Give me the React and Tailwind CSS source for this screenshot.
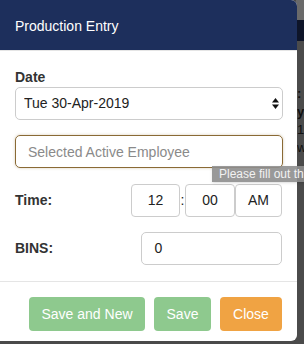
import React from 'react';

const App = () => {
  return (
    <div
      className="relative w-[304px] h-[344px] overflow-hidden bg-[#4a4a4a] text-[#333]"
      style={{ fontFamily: '"Liberation Sans", Arial, sans-serif' }}
    >
      {/* page behind the backdrop, only the right strip shows */}
      <div className="absolute right-0 top-0 w-[8px] h-[344px] flex flex-col">
        <div className="h-[20px] bg-[#6a6a6a]"></div>
        <div className="h-[21px] bg-[#0e1529]"></div>
        <div className="flex-1 bg-[#4b4b4b] text-[#111] text-[13px] leading-[18px] pl-[1px] pt-[44px]">
          <div className="font-bold">:</div>
          <div className="font-bold">y</div>
          <div>1:</div>
          <div>w</div>
        </div>
      </div>

      <div className="relative w-[297px] h-[341px] bg-white rounded-r-[6px] flex flex-col overflow-hidden">
        <div className="h-[51px] bg-[#1d2f5c] border-b border-[#e5e5e5] flex items-center px-[15px]">
          <h4 className="text-white text-[14px] pt-[3px]">Production Entry</h4>
        </div>

        <div className="px-[15px] pt-[17px] flex flex-col">
          <label className="font-bold text-[14px] leading-[18px] mb-[1px]">Date</label>
          <div className="relative">
            <select
              defaultValue="d"
              className="appearance-none w-[268px] h-[33px] border border-[#ccc] rounded-[5px] pl-[8px] text-[14px] text-[#222] bg-white outline-none"
            >
              <option value="d">Tue 30-Apr-2019</option>
            </select>
            <svg className="absolute left-[256px] top-[10px]" width="9" height="13" viewBox="0 0 9 13">
              <path d="M4.5 1 L8 5.5 H1 Z" fill="#111" />
              <path d="M4.5 12 L8 7.5 H1 Z" fill="#111" />
            </svg>
          </div>

          <input
            placeholder="Selected Active Employee"
            className="mt-[15px] w-[268px] h-[33px] border border-[#8a6a35] rounded-[5px] px-[12px] text-[14px] placeholder-[#8a8a8a] outline-none shadow-[0_0_3px_rgba(138,106,53,0.35)]"
          />

          <div className="flex items-center mt-[16px] h-[33px]">
            <span className="font-bold text-[14px] w-[116px]">Time:</span>
            <div className="w-[49px] h-[33px] border border-[#ccc] rounded-[4px] flex items-center justify-center text-[14px] text-[#222]">12</div>
            <span className="w-[5px] text-center text-[14px] text-[#222]">:</span>
            <div className="w-[50px] h-[33px] border border-[#ccc] rounded-[4px] flex items-center justify-center text-[14px] text-[#222]">00</div>
            <div className="w-[47px] h-[33px] border border-[#ccc] rounded-[4px] flex items-center justify-center text-[14px] text-[#222]">AM</div>
          </div>

          <div className="flex items-center mt-[15px] h-[33px]">
            <span className="font-bold text-[14px] w-[127px]">BINS:</span>
            <div className="w-[141px] h-[33px] border border-[#ccc] rounded-[5px] flex items-center px-[12px] text-[14px] text-[#222]">0</div>
          </div>
        </div>

        <div className="mt-[16px] border-t border-[#e5e5e5] flex justify-end gap-[9px] px-[15px] pt-[15px]">
          <button className="w-[116px] h-[34px] rounded-[4px] bg-[#8ec98e] text-white text-[14px]">Save and New</button>
          <button className="w-[57px] h-[34px] rounded-[4px] bg-[#8ec98e] text-white text-[14px]">Save</button>
          <button className="w-[62px] h-[34px] rounded-[4px] bg-[#f0a343] text-white text-[14px]">Close</button>
        </div>
      </div>

      {/* validation tooltip */}
      <div className="absolute left-[212px] top-[166px] h-[16px] pl-[7px] pr-[2px] bg-[#8e8e8e]/90 text-[#f2f2f2] text-[12px] leading-[16px] whitespace-nowrap shadow">
        Please fill out this field.
      </div>
    </div>
  );
};

export default App;
